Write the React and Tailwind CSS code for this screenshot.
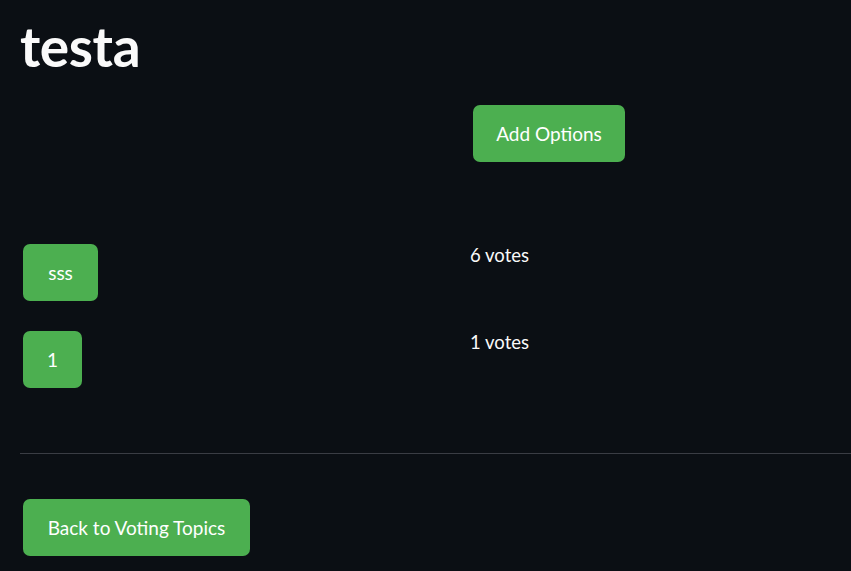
export default function App() {
  const options = [
    { name: "sss", votes: 6, width: "w-[75px]" },
    { name: "1", votes: 1, width: "w-[59px]" },
  ]

  return (
    <div
      className="min-h-screen w-full overflow-hidden bg-[#0b0f14] text-[#fafafa]"
      style={{ fontFamily: '"Source Sans Pro", Lato, "Noto Sans", sans-serif' }}
    >
      <div className="pl-5 pt-[14px]">
        <h1 className="text-[55px] font-bold leading-[64px] tracking-[-0.4px]">testa</h1>

        {/* Top row */}
        <div className="mt-[27px] grid grid-cols-[450px_1fr]">
          <div></div>
          <div>
            <button className="ml-[3px] h-[57px] w-[152px] rounded-[7px] bg-[#4caf50] pt-[2px] text-[19px] text-white">
              Add Options
            </button>
          </div>
        </div>

        {/* Options list */}
        <div className="mt-[82px] flex flex-col gap-[30px]">
          {options.map((o) => (
            <div key={o.name} className="grid grid-cols-[450px_1fr] items-start">
              <div>
                <button
                  className={`ml-[3px] h-[57px] ${o.width} rounded-[7px] bg-[#4caf50] pt-[2px] text-[19px] text-white`}
                >
                  {o.name}
                </button>
              </div>
              <p className="-mt-[1px] text-[18.5px] leading-[24px]">{o.votes} votes</p>
            </div>
          ))}
        </div>

        <hr className="mt-[65px] border-0 border-t border-[#3a3d44]" />

        <button className="ml-[3px] mt-[45px] h-[57px] w-[227px] rounded-[7px] bg-[#4caf50] pt-[2px] text-[19px] text-white">
          Back to Voting Topics
        </button>
      </div>
    </div>
  )
}
